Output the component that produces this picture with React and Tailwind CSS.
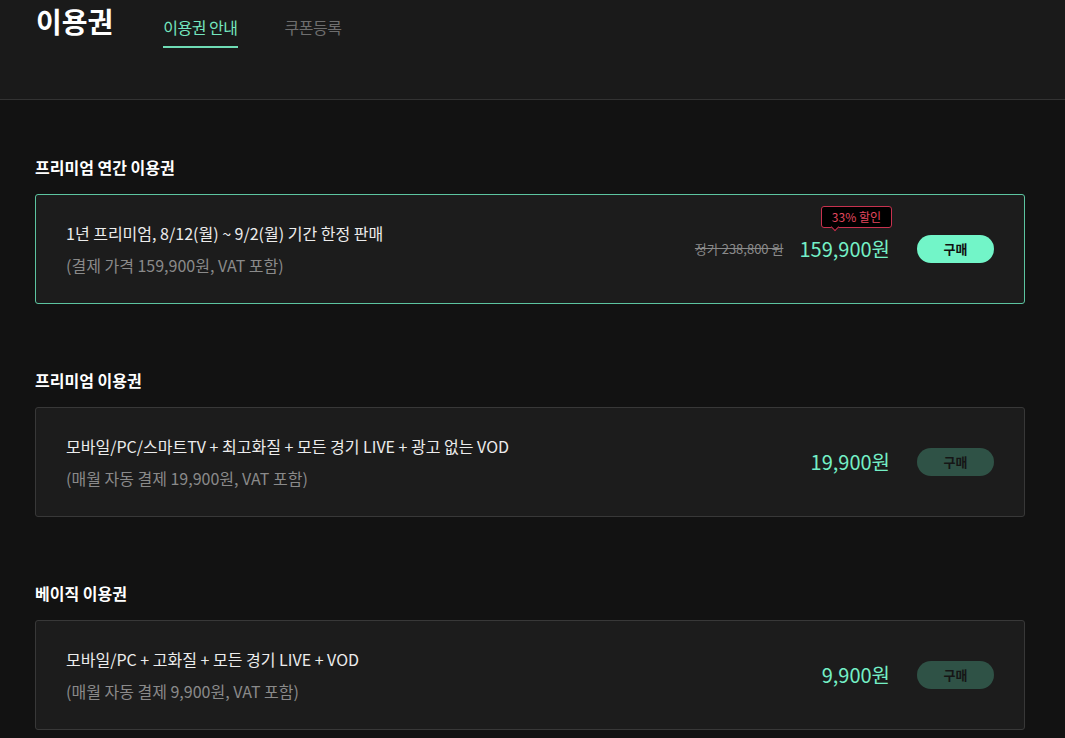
import React from 'react'

const font = { fontFamily: '"Noto Sans CJK KR", "Noto Sans", sans-serif' }

const plans = [
  {
    heading: '프리미엄 연간 이용권',
    title: '1년 프리미엄, 8/12(월) ~ 9/2(월) 기간 한정 판매',
    sub: '(결제 가격 159,900원, VAT 포함)',
    price: '159,900원',
    original: '정가 238,800 원',
    badge: '33% 할인',
    active: true,
  },
  {
    heading: '프리미엄 이용권',
    title: '모바일/PC/스마트TV + 최고화질 + 모든 경기 LIVE + 광고 없는 VOD',
    sub: '(매월 자동 결제 19,900원, VAT 포함)',
    price: '19,900원',
  },
  {
    heading: '베이직 이용권',
    title: '모바일/PC + 고화질 + 모든 경기 LIVE + VOD',
    sub: '(매월 자동 결제 9,900원, VAT 포함)',
    price: '9,900원',
  },
]

function PlanCard({ plan }) {
  return (
    <section>
      <h2 className="mb-[15px] text-[16px] font-bold leading-[24px] text-white">{plan.heading}</h2>
      <div
        className={
          'flex h-[110px] items-center justify-between rounded-[3px] border bg-[#1c1c1c] pl-[30px] pr-[30px] ' +
          (plan.active ? 'border-[#5cc4a0]' : 'border-[#383838]')
        }
      >
        <div className="flex flex-col gap-[8px]">
          <p className="text-[16px] leading-[24px] text-[#ececec]">{plan.title}</p>
          <p className="text-[16px] leading-[24px] text-[#8a8a8a]">{plan.sub}</p>
        </div>
        <div className="flex items-center">
          {plan.original && (
            <span className="mr-[16px] text-[13px] leading-[20px] text-[#8a8a8a] line-through">{plan.original}</span>
          )}
          <div className="relative">
            {plan.badge && (
              <div className="absolute bottom-full right-[-2px] mb-[7px] rounded-[3px] border border-[#c8324f] bg-black px-[10px] text-[12px] leading-[20px] whitespace-nowrap text-[#e2475f]">
                {plan.badge}
                <span className="absolute left-[10px] top-full h-[6px] w-[6px] -translate-y-[3px] rotate-45 border-b border-r border-[#c8324f] bg-black" />
              </div>
            )}
            <span className="text-[20px] leading-[28px] text-[#74efc6]">{plan.price}</span>
          </div>
          <button
            type="button"
            className={
              'ml-[27px] h-[28px] w-[77px] rounded-full text-[13px] font-bold ' +
              (plan.active ? 'bg-[#72f5c8] text-[#111111]' : 'bg-[#2f5246] text-[#161616]')
            }
          >
            구매
          </button>
        </div>
      </div>
    </section>
  )
}

export default function App() {
  return (
    <div className="min-h-screen bg-[#121212]" style={font}>
      <header className="h-[100px] border-b border-[#333333] bg-[#1a1a1a] px-[36px] pt-[1px]">
        <div className="flex items-start">
          <h1 className="text-[28px] font-bold leading-[40px] text-white">이용권</h1>
          <nav className="ml-[50px] flex gap-[47px] pt-[14px]">
            <a className="border-b-2 border-[#6fdcb5] pb-[7px] text-[16px] leading-[24px] tracking-[-0.03em] text-[#74e6bf]">이용권 안내</a>
            <a className="pb-[7px] text-[16px] leading-[24px] tracking-[-0.03em] text-[#6e6e6e]">쿠폰등록</a>
          </nav>
        </div>
      </header>
      <main className="flex flex-col gap-[64px] pl-[35px] pr-[40px] pt-[55px] pb-[40px]">
        {plans.map((plan) => (
          <PlanCard key={plan.heading} plan={plan} />
        ))}
      </main>
    </div>
  )
}
